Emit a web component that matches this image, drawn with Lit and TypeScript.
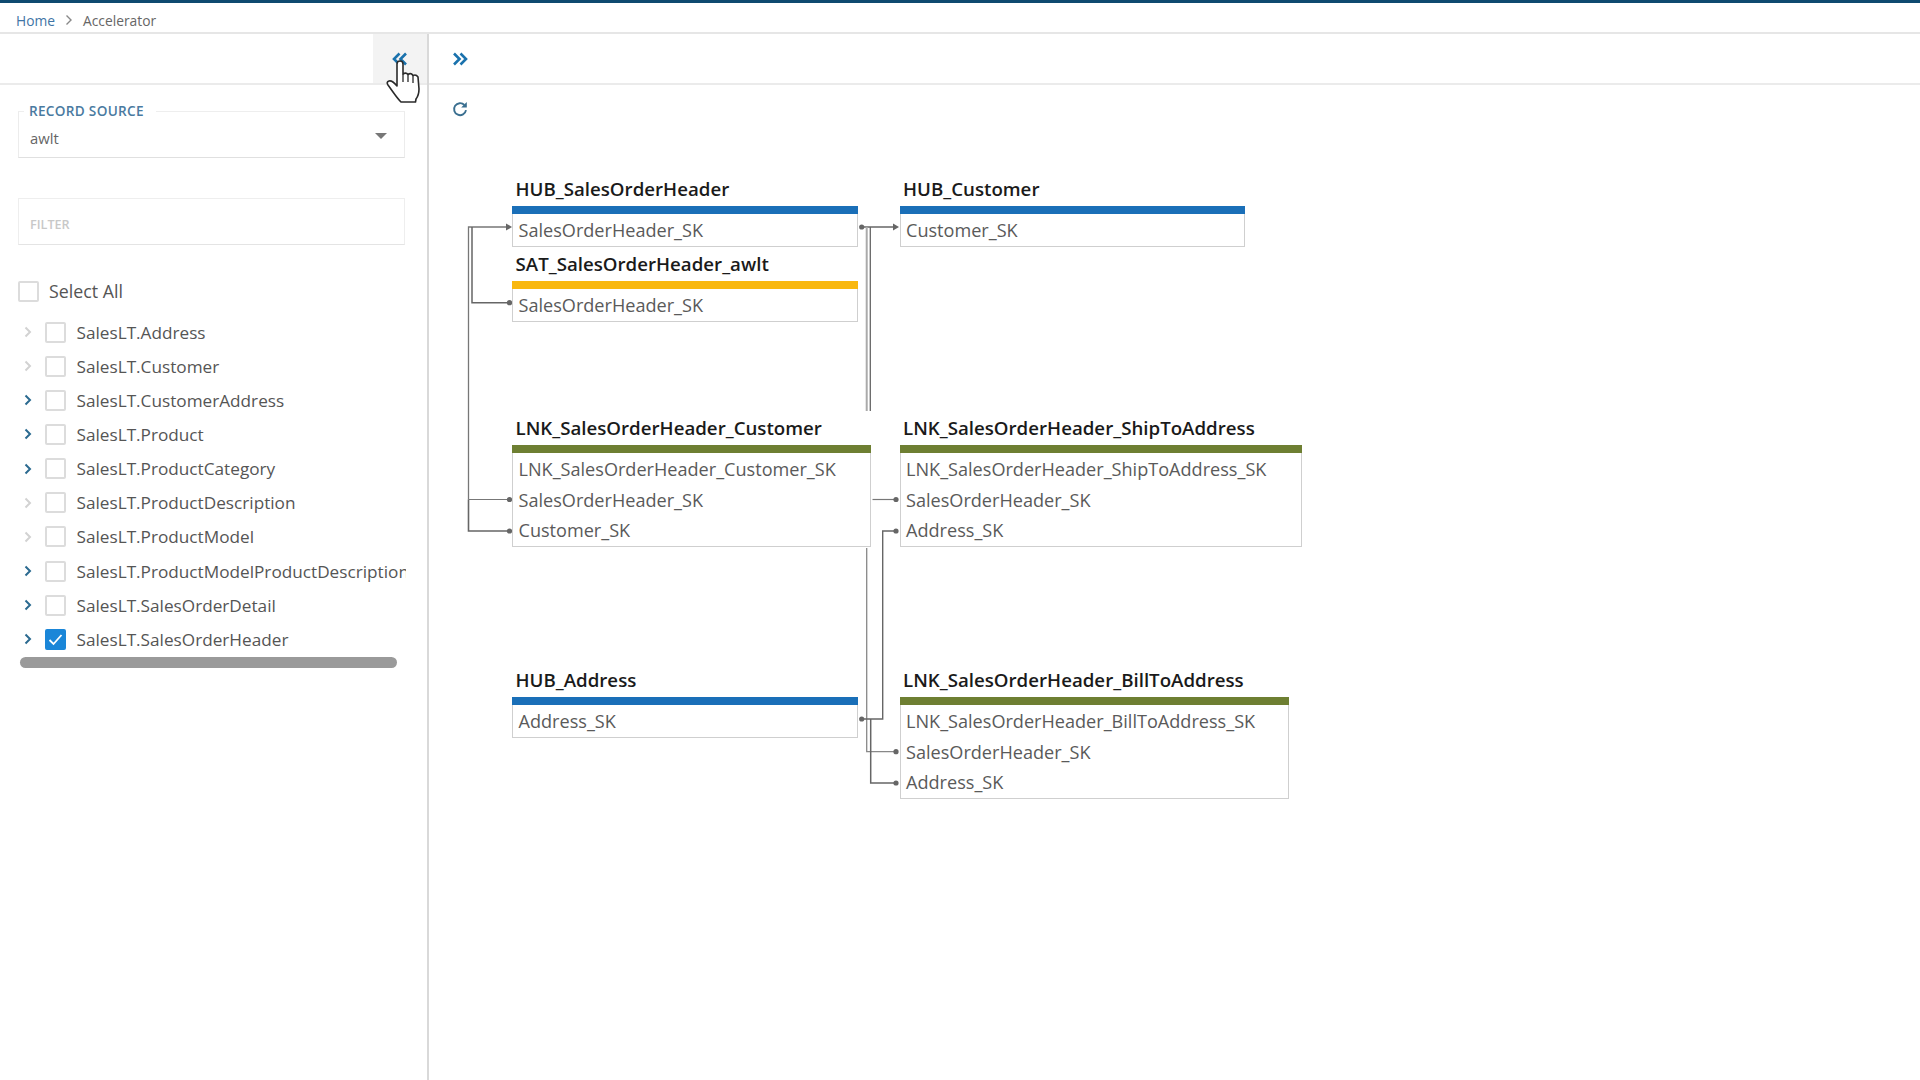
import { LitElement, html, css, svg } from "lit";
import { customElement } from "lit/decorators.js";

const OX = 429;
const OY = 130;

type Node = { title: string; x: number; y: number; w: number; color: string; rows: string[] };

const BLUE = "#1a6fb8";
const YELLOW = "#f9b80f";
const GREEN = "#6e7f32";

const NODES: Node[] = [
  { title: "HUB_SalesOrderHeader", x: 512, y: 177, w: 346, color: BLUE, rows: ["SalesOrderHeader_SK"] },
  { title: "HUB_Customer", x: 899.5, y: 177, w: 345.5, color: BLUE, rows: ["Customer_SK"] },
  { title: "SAT_SalesOrderHeader_awlt", x: 512, y: 252, w: 346, color: YELLOW, rows: ["SalesOrderHeader_SK"] },
  {
    title: "LNK_SalesOrderHeader_Customer", x: 512, y: 416, w: 359, color: GREEN,
    rows: ["LNK_SalesOrderHeader_Customer_SK", "SalesOrderHeader_SK", "Customer_SK"],
  },
  {
    title: "LNK_SalesOrderHeader_ShipToAddress", x: 899.5, y: 416, w: 402.5, color: GREEN,
    rows: ["LNK_SalesOrderHeader_ShipToAddress_SK", "SalesOrderHeader_SK", "Address_SK"],
  },
  { title: "HUB_Address", x: 512, y: 668, w: 346, color: BLUE, rows: ["Address_SK"] },
  {
    title: "LNK_SalesOrderHeader_BillToAddress", x: 899.5, y: 668, w: 389.5, color: GREEN,
    rows: ["LNK_SalesOrderHeader_BillToAddress_SK", "SalesOrderHeader_SK", "Address_SK"],
  },
];

const TREE: { name: string; active: boolean; checked?: boolean }[] = [
  { name: "SalesLT.Address", active: false },
  { name: "SalesLT.Customer", active: false },
  { name: "SalesLT.CustomerAddress", active: true },
  { name: "SalesLT.Product", active: true },
  { name: "SalesLT.ProductCategory", active: true },
  { name: "SalesLT.ProductDescription", active: false },
  { name: "SalesLT.ProductModel", active: false },
  { name: "SalesLT.ProductModelProductDescription", active: true },
  { name: "SalesLT.SalesOrderDetail", active: true },
  { name: "SalesLT.SalesOrderHeader", active: true, checked: true },
];

const LINES: { d: string; c: string; w: number }[] = [
  { d: "M508 227H468.5V499.5", c: "#777", w: 1.3 },
  { d: "M468.5 499.5V531H508", c: "#666", w: 1.6 },
  { d: "M472 227V302.7H508", c: "#666", w: 1.5 },
  { d: "M468.5 499.5H508", c: "#777", w: 1.2 },
  { d: "M861 227H896", c: "#666", w: 1.5 },
  { d: "M866.7 227V411", c: "#aaa", w: 2 },
  { d: "M870.3 227V411", c: "#666", w: 1.3 },
  { d: "M866.7 548V751.7H896", c: "#888", w: 1.3 },
  { d: "M870.7 719V783H896", c: "#666", w: 1.5 },
  { d: "M861 719H882.7V531H896", c: "#666", w: 1.4 },
  { d: "M872.5 499.5H896", c: "#777", w: 1.2 },
];
const DOTS: [number, number][] = [
  [509.5, 302.7], [509.5, 499.5], [509.5, 531],
  [861.7, 227], [861.7, 719],
  [896, 499.5], [896, 531], [896, 751.7], [896, 783],
];
const ARROWS: [number, number][] = [[512, 227], [899, 227]];

@customElement("app-root")
export class AppRoot extends LitElement {
  static styles = css`
    :host {
      display: flex;
      flex-direction: column;
      width: 1920px;
      height: 1080px;
      overflow: hidden;
      background: #fff;
      font-family: "Open Sans", "Noto Sans", sans-serif;
      color: #555;
      position: relative;
    }
    .accent { height: 3px; background: #0f4a70; flex: none; }
    .crumbs {
      height: 31px;
      flex: none;
      box-sizing: border-box;
      border-bottom: 2px solid #e6e6e6;
      display: flex;
      align-items: center;
      gap: 10px;
      padding: 5px 0 0 16px;
      font-size: 13.8px;
      color: #666;
    }
    .crumbs .home { color: #3f75a6; }
    .crumbs svg { width: 8px; height: 12px; }
    .main { flex: 1; display: flex; min-height: 0; }
    aside {
      width: 429px;
      flex: none;
      box-sizing: border-box;
      border-right: 2px solid #d9d9d9;
      display: flex;
      flex-direction: column;
    }
    .tool {
      height: 51px;
      flex: none;
      box-sizing: border-box;
      border-bottom: 2px solid #ebebeb;
      display: flex;
      justify-content: flex-end;
    }
    .tool-btn {
      width: 54px;
      display: flex;
      align-items: center;
      padding-left: 19px;
      box-sizing: border-box;
    }
    .tool-btn.hover { background: #f3f3f3; }
    .tool-btn svg, .content-tool svg { width: 16px; height: 14px; }
    .side-body { padding: 0 22px 0 18px; display: flex; flex-direction: column; }
    fieldset {
      margin: 18px 0 0;
      padding: 0 11px;
      height: 55px;
      box-sizing: border-box;
      border: 1px solid #ececec;
      border-bottom-color: #e0e0e0;
      border-top-color: #eee;
      position: relative;
    }
    legend {
      padding: 0 12px 0 5px;
      margin-left: -6px;
      font-size: 13.6px;
      line-height: 16px;
      letter-spacing: 0.3px;
      color: #4a7a9f;
      font-weight: 600;
    }
    .value { font-size: 14.8px; color: #666; line-height: 20px; margin-top: 9px; }
    .caret {
      position: absolute;
      right: 17px;
      top: 14px;
      width: 0;
      height: 0;
      border-left: 6px solid transparent;
      border-right: 6px solid transparent;
      border-top: 6px solid #777;
    }
    .filter {
      margin-top: 40px;
      height: 47px;
      box-sizing: border-box;
      border: 1px solid #eee;
      border-bottom-color: #e4e4e4;
      padding: 18px 11px 0;
      font-size: 12.6px;
      line-height: 16px;
      color: #c8c8c8;
      font-weight: 600;
    }
    .all {
      margin-top: 34px;
      display: flex;
      align-items: center;
      gap: 10px;
      height: 24px;
      font-size: 17.8px;
      color: #555;
    }
    .box {
      width: 21px;
      height: 21px;
      flex: none;
      box-sizing: border-box;
      border: 2px solid #dcdcdc;
      border-radius: 2px;
      background: #fff;
    }
    .box.on {
      background: #1a86d8;
      border-color: #1a86d8;
      display: flex;
      align-items: center;
      justify-content: center;
    }
    .box.on svg { width: 15px; height: 13px; }
    .tree { margin-top: 12px; overflow: hidden; width: 388px; }
    .item {
      height: 34.15px;
      display: flex;
      align-items: center;
      white-space: nowrap;
      font-size: 17.2px;
      color: #555;
    }
    .chev { width: 26.5px; flex: none; display: flex; padding-left: 5.5px; box-sizing: border-box; }
    .chev svg { width: 8px; height: 12px; }
    .item .box { margin-right: 11px; }
    .scroll {
      margin: 1px 0 0 2px;
      width: 377px;
      height: 11px;
      border-radius: 6px;
      background: #9a9a9a;
    }
    .content { flex: 1; display: flex; flex-direction: column; min-width: 0; }
    .content-tool {
      height: 51px;
      flex: none;
      box-sizing: border-box;
      border-bottom: 2px solid #ebebeb;
      display: flex;
      align-items: center;
      padding-left: 23px;
    }
    .refresh { height: 45px; flex: none; padding: 16px 0 0 23px; box-sizing: border-box; }
    .refresh svg { width: 16px; height: 16px; display: block; }
    .canvas { flex: 1; position: relative; }
    .wires { position: absolute; inset: 0; width: 100%; height: 100%; }
    .node { position: absolute; }
    .title {
      height: 29px;
      padding-left: 3.5px;
      font-size: 18.7px;
      line-height: 23px;
      font-weight: 600;
      color: #1a1a1a;
      white-space: nowrap;
    }
    .bar { height: 8px; }
    .rows {
      box-sizing: border-box;
      border: 1px solid #cfcfcf;
      border-top: 0;
      padding-top: 1px;
    }
    .row {
      height: 30.6px;
      line-height: 30.6px;
      padding-left: 5.5px;
      font-size: 18.1px;
      color: #5a5a5a;
      white-space: nowrap;
    }
    .hand {
      position: absolute;
      left: 386px;
      top: 59px;
      width: 34px;
      height: 44px;
    }
  `;

  private chevron(color: string) {
    return html`<svg viewBox="0 0 8 12"><path d="M1.5 1.5 6 6 1.5 10.5" fill="none" stroke=${color} stroke-width="2"/></svg>`;
  }

  private wires() {
    return html`<svg class="wires" viewBox="${OX} ${OY} 1491 950" preserveAspectRatio="xMinYMin meet">
      ${LINES.map((l) => svg`<path d=${l.d} fill="none" stroke=${l.c} stroke-width=${l.w}/>`)}
      ${DOTS.map(([x, y]) => svg`<circle cx=${x} cy=${y} r="2.6" fill="#666"/>`)}
      ${ARROWS.map(([x, y]) => svg`<path d="M${x - 6} ${y - 3.6}L${x} ${y}L${x - 6} ${y + 3.6}Z" fill="#666"/>`)}
    </svg>`;
  }

  render() {
    return html`
      <div class="accent"></div>
      <nav class="crumbs">
        <span class="home">Home</span>
        <svg viewBox="0 0 8 12"><path d="M1.5 1.5 6 6 1.5 10.5" fill="none" stroke="#888" stroke-width="1.4"/></svg>
        <span>Accelerator</span>
      </nav>
      <div class="main">
        <aside>
          <div class="tool">
            <div class="tool-btn hover">
              <svg viewBox="0 0 16 14"><path d="M7.5 1.5 2 7l5.5 5.5M14 1.5 8.5 7l5.5 5.5" fill="none" stroke="#1a72ad" stroke-width="2.6"/></svg>
            </div>
          </div>
          <div class="side-body">
            <fieldset>
              <legend>RECORD SOURCE</legend>
              <div class="value">awlt</div>
              <span class="caret"></span>
            </fieldset>
            <div class="filter">FILTER</div>
            <div class="all"><span class="box"></span><span>Select All</span></div>
            <div class="tree">
              ${TREE.map(
                (t) => html`<div class="item">
                  <span class="chev">${this.chevron(t.active ? "#2b6a90" : "#d2d2d2")}</span>
                  ${t.checked
                    ? html`<span class="box on"><svg viewBox="0 0 15 13"><path d="M1.5 7 5.5 11 13.5 2" fill="none" stroke="#fff" stroke-width="1.8"/></svg></span>`
                    : html`<span class="box"></span>`}
                  <span>${t.name}</span>
                </div>`
              )}
            </div>
            <div class="scroll"></div>
          </div>
        </aside>
        <section class="content">
          <div class="content-tool">
            <svg viewBox="0 0 16 14"><path d="M2 1.5 7.5 7 2 12.5M8.5 1.5 14 7l-5.5 5.5" fill="none" stroke="#1a72ad" stroke-width="2.6"/></svg>
          </div>
          <div class="refresh">
            <svg viewBox="0 0 16 16">
              <path d="M12.4 4A6 6 0 1 0 14 9.2" fill="none" stroke="#3a6f90" stroke-width="1.9"/>
              <path d="M9.2 6.4H14.8V1Z" fill="#3a6f90"/>
            </svg>
          </div>
          <div class="canvas">
            ${this.wires()}
            ${NODES.map(
              (n) => html`<div class="node" style="left:${n.x - OX}px;top:${n.y - OY}px;width:${n.w}px">
                <div class="title">${n.title}</div>
                <div class="bar" style="background:${n.color}"></div>
                <div class="rows">${n.rows.map((r) => html`<div class="row">${r}</div>`)}</div>
              </div>`
            )}
          </div>
        </section>
      </div>
      <svg class="hand" viewBox="0 0 34 44">
        <path d="M11 24V5Q11 2 14 2T17 5V15Q20 13 22 15.5Q25 13.5 27 16.5Q30 15 32 18L33 30Q33 36 30 40L29.5 43H15Q12 40 7 33L2 26Q0 23 3 22Q6 21 11 27Z" fill="#fff" stroke="#2a2a2a" stroke-width="1.6" stroke-linejoin="round"/>
        <path d="M17 15V23M22 15.5V23M27 16.5V24" fill="none" stroke="#2a2a2a" stroke-width="1.3"/>
      </svg>
    `;
  }
}
